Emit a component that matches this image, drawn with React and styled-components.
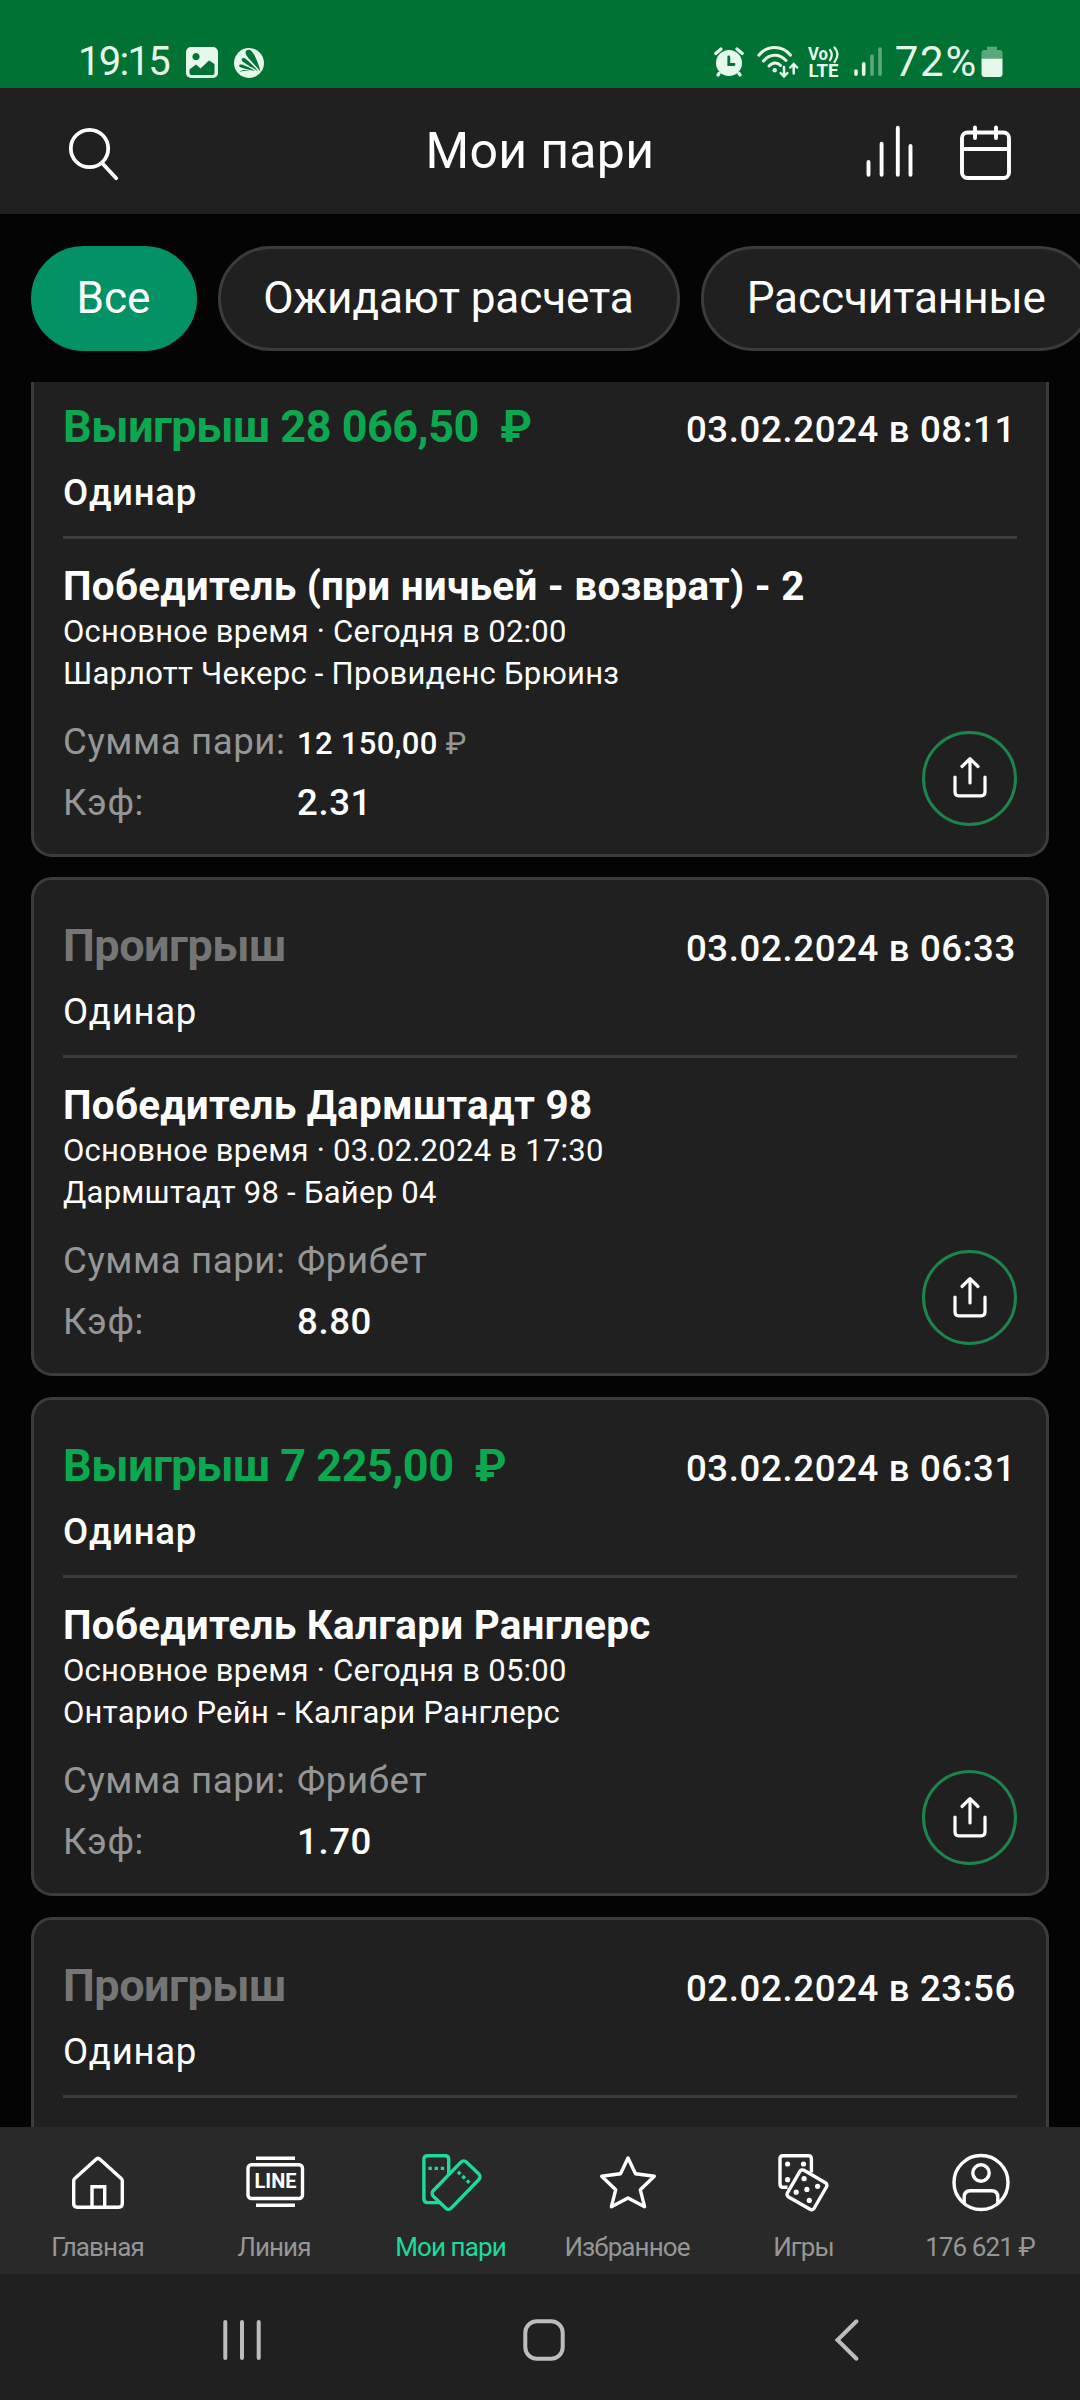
import React from "react";
import styled, { createGlobalStyle } from "styled-components";

const GlobalStyle = createGlobalStyle`
  * {
    box-sizing: border-box;
  }
  body {
    margin: 0;
    background: #040404;
    font-family: Roboto, "Liberation Sans", sans-serif;
    color: #fff;
  }
  svg {
    display: block;
    flex-shrink: 0;
  }
`;

const Screen = styled.div`
  width: 1080px;
  height: 2400px;
  display: flex;
  flex-direction: column;
  overflow: hidden;
  background: #040404;
`;

/* status bar */
const StatusBar = styled.div`
  height: 88px;
  flex-shrink: 0;
  display: flex;
  justify-content: space-between;
  padding: 42px 77px 0 78px;
  background: #007233;
  color: #e6f8ec;
`;
const StatusGroup = styled.div`
  display: flex;
  height: 40px;
  gap: ${({ $gap }) => $gap || 0};
`;
const StatusText = styled.span`
  font-size: ${({ $size }) => $size || "40px"};
  line-height: 40px;
  letter-spacing: ${({ $spacing }) => $spacing};
  white-space: nowrap;
`;

/* header */
const Header = styled.header`
  height: 126px;
  flex-shrink: 0;
  display: grid;
  grid-template-columns: 1fr auto 1fr;
  align-items: center;
  padding: 0 64px;
  background: #202020;
`;
const HeaderTitle = styled.h1`
  margin: 0;
  font-size: 50px;
  font-weight: 400;
  line-height: 60px;
  letter-spacing: 0.3px;
`;
const HeaderActions = styled.div`
  display: flex;
  justify-content: flex-end;
  gap: 47px;
`;

/* filter pills */
const Filters = styled.div`
  height: 168px;
  flex-shrink: 0;
  display: flex;
  gap: 21px;
  padding: 32px 0 0 31px;
`;
const Pill = styled.button`
  flex-shrink: 0;
  height: 105px;
  padding: 0 43.3px 0 42.6px;
  border: 3px solid ${({ $active }) => ($active ? "#039265" : "#3c3c3c")};
  border-radius: 53px;
  background: ${({ $active }) => ($active ? "#039265" : "#202020")};
  color: #fff;
  font-family: inherit;
  font-size: 44.1px;
  line-height: 53px;
  letter-spacing: -0.1px;
  white-space: nowrap;
`;

/* bets */
const BetList = styled.main`
  flex: 1;
  min-height: 0;
  overflow: hidden;
  padding: 0 31px;
`;
const BetCard = styled.article`
  height: 499px;
  margin-bottom: 20.8px;
  padding: 39px 29px 0;
  border: 3px solid #3c3c3c;
  border-radius: 21px;
  background: #202020;

  &:first-child {
    margin-top: -24.4px;
  }
`;
const CardTop = styled.div`
  display: flex;
  justify-content: space-between;
  align-items: baseline;
  height: 53px;
`;
const Result = styled.h2`
  margin: 0;
  font-size: 45px;
  font-weight: 700;
  line-height: 53px;
  letter-spacing: -0.5px;
  white-space: pre;
  color: ${({ $win }) => ($win ? "#0ba84f" : "#757575")};
`;
const BetDate = styled.span`
  font-size: 36.6px;
  font-weight: 500;
  line-height: 43px;
  letter-spacing: 0.65px;
  margin-right: 1px;
`;
const BetType = styled.div`
  margin-top: 18px;
  font-size: 36.6px;
  font-weight: ${({ $win }) => ($win ? 500 : 400)};
  line-height: 43px;
  letter-spacing: 0.7px;
`;
const Divider = styled.hr`
  height: 3px;
  margin: 22px 0 25px;
  border: 0;
  background: #3c3c3c;
`;
const Outcome = styled.h3`
  margin: 0 0 1px;
  font-size: 40.4px;
  font-weight: 700;
  line-height: 46px;
  letter-spacing: 0.26px;
`;
const EventLine = styled.div`
  font-size: 31px;
  line-height: 42px;
  letter-spacing: 0.26px;
`;
const CardBottom = styled.div`
  display: flex;
  justify-content: space-between;
  margin-top: 25px;
`;
const Facts = styled.div`
  display: grid;
  grid-template-columns: 234px auto;
  row-gap: 18px;
  align-content: start;
  line-height: 43px;
`;
const Label = styled.span`
  font-size: 36.6px;
  color: #969696;
  letter-spacing: 0.6px;
  white-space: nowrap;
`;
const Value = styled.span`
  height: 43px;
  font-size: ${({ $small }) => ($small ? "31px" : "36.6px")};
  font-weight: 500;
  letter-spacing: ${({ $small }) => ($small ? "0.3px" : "0.6px")};
  padding-top: ${({ $small }) => ($small ? "2px" : "0")};
`;
const Currency = styled.span`
  font-weight: 400;
  color: #969696;
`;
const ShareButton = styled.button`
  width: 95px;
  height: 95px;
  margin-top: 11px;
  padding: 0;
  display: flex;
  align-items: center;
  justify-content: center;
  border: 3px solid #1b864b;
  border-radius: 50%;
  background: none;
`;

/* bottom navigation */
const TabBar = styled.nav`
  height: 147px;
  flex-shrink: 0;
  display: grid;
  grid-template-columns: repeat(6, 176.5px);
  padding: 23px 11px 0 10px;
  background: #292929;
`;
const Tab = styled.a`
  display: flex;
  flex-direction: column;
  align-items: center;
  color: ${({ $active }) => ($active ? "#1cdb9d" : "#fff")};
`;
const TabLabel = styled.span`
  margin-top: 18px;
  padding-right: 1.5px;
  font-size: 26px;
  line-height: 30px;
  letter-spacing: -0.9px;
  white-space: nowrap;
  color: ${({ $active }) => ($active ? "#1cdb9d" : "#969696")};
`;

const SystemBar = styled.div`
  height: 126px;
  flex-shrink: 0;
  display: grid;
  grid-template-columns: repeat(3, 302px);
  align-items: center;
  justify-items: center;
  padding: 6px 83px 0 91px;
  background: #202020;
`;

const GalleryIcon = () => (
  <svg width="32" height="40" viewBox="0 0 32 40" fill="none">
    <path
      fillRule="evenodd"
      fill="currentColor"
      d="M5 5H27a5 5 0 0 1 5 5V31a5 5 0 0 1-5 5H5a5 5 0 0 1-5-5V10a5 5 0 0 1 5-5ZM10 11a3.6 3.6 0 1 0 .01 0ZM3.500 27.500V31a2 2 0 0 0 2 2H26.500a2 2 0 0 0 2-2V22L23 18.500 14.500 26.500 10 22.500Z"
    />
  </svg>
);

const FanIcon = () => (
  <svg width="30" height="40" viewBox="0 0 30 40">
    <circle cx="15" cy="21" r="15" fill="currentColor" />
    <g fill="#007233">
      <path d="M26.500 29.500C21 23 15 17 12.500 13.500C10.500 10.500 12 7.500 15 7.800C19.500 8.500 24 20 26.500 29.500Z" />
      <path d="M24 29C17 25 11 21.500 8.600 19.500C6.500 17.500 8.500 15 11 16.500C15 19 20 24.500 24 29Z" />
      <path d="M21 29C15 28 8.500 26 6 25C4 23.800 5.500 21.800 8 22.600C12 24 17 26.500 21 29Z" />
      <path d="M5 30C8 27.500 12 27.500 17 28.600C11 28.200 8 29.500 5 30Z" />
    </g>
  </svg>
);

const AlarmIcon = () => (
  <svg width="30" height="40" viewBox="0 0 30 40" fill="none" stroke="currentColor" strokeLinecap="round">
    <circle cx="15" cy="21" r="13" fill="currentColor" stroke="none" />
    <path d="M1.800 11.500L7 7M28.200 11.500L23 7M5 31.500L4 33M25 31.500L26 33" strokeWidth="3.200" />
    <path d="M14.800 15V22.500H20" stroke="#007233" strokeWidth="2.800" />
  </svg>
);

const WifiIcon = () => (
  <svg width="42" height="40" viewBox="0 0 42 40" fill="none" stroke="currentColor" strokeLinecap="round">
    <path d="M1.800 13.200C10.500 3 25 3 33.500 13.200" strokeWidth="3" />
    <path d="M6.500 19C13 11.500 22.500 11.500 29 18.500" strokeWidth="3" />
    <path d="M12 24C15.500 20 20.500 20 23.500 23.500" strokeWidth="3" />
    <circle cx="17.700" cy="28.300" r="2.200" fill="currentColor" stroke="none" />
    <path d="M27 25V34M23.600 31L27 34.500L30.400 31" strokeWidth="2.500" />
    <path d="M36.700 31.500V22.500M33.300 25.500L36.700 22L40.100 25.500" strokeWidth="2.500" />
  </svg>
);

const VolteIcon = () => (
  <svg width="33" height="40" viewBox="0 0 33 40" fill="currentColor">
    <text x="0" y="18" fontFamily="Roboto" fontSize="18" fontWeight="700" textLength="20" lengthAdjust="spacingAndGlyphs">
      Vo
    </text>
    <path
      d="M22 8Q25.500 12.500 22 18M26.500 5.500Q32.500 12 26.500 20"
      fill="none"
      stroke="currentColor"
      strokeWidth="2.200"
      strokeLinecap="round"
    />
    <text x="0.500" y="35" fontFamily="Roboto" fontSize="18" fontWeight="700" textLength="30" lengthAdjust="spacingAndGlyphs">
      LTE
    </text>
  </svg>
);

const SignalIcon = () => (
  <svg width="28" height="40" viewBox="0 0 28 40" stroke="currentColor" strokeWidth="3.600" strokeLinecap="round">
    <path d="M2 29V32.300M9.700 21.700V32.300" />
    <path d="M18 14V32.300M26 7V32.300" opacity="0.4" />
  </svg>
);

const BatteryIcon = () => (
  <svg width="22" height="40" viewBox="0 0 22 40" fill="currentColor">
    <path d="M6 4.700H16V8H19A2.500 2.500 0 0 1 21.500 10.500V17H0.500V10.500A2.500 2.500 0 0 1 3 8H6Z" opacity="0.4" />
    <path d="M0.500 16.700H21.500V32A3 3 0 0 1 18.500 35H3.500A3 3 0 0 1 0.500 32Z" />
  </svg>
);

const SearchIcon = () => (
  <svg width="60" height="60" viewBox="60 119 60 60" overflow="visible" fill="none" stroke="#fff" strokeWidth="3.800" strokeLinecap="round">
    <circle cx="85.500" cy="146.500" r="18.700" />
    <path d="M98.500 161.500L112.200 176.200" />
  </svg>
);

const StatsIcon = () => (
  <svg width="48" height="58" viewBox="0 0 48 58" fill="none" stroke="#fff" strokeWidth="3.900" strokeLinecap="round">
    <path d="M3.500 40V52.700M16.600 21.700V52.700M32.800 5.700V52.700M45.500 24V52.700" />
  </svg>
);

const CalendarIcon = () => (
  <svg width="56" height="58" viewBox="0 0 56 58" fill="none" stroke="#fff" strokeWidth="3.900" strokeLinecap="round">
    <rect x="2" y="10.500" width="47" height="45.500" rx="5.500" />
    <path d="M2 27H49M15 5.500V16M36 5.500V16" />
  </svg>
);

const ShareIcon = () => (
  <svg width="36" height="44" viewBox="0 0 36 44" fill="none" stroke="#fff" strokeWidth="3.200" strokeLinecap="round" strokeLinejoin="round">
    <path d="M18 27V3.500M10 10.500L18 2.700L26 10.500" />
    <path d="M3 21V36Q3 39.800 6.800 39.800H29.200Q33 39.800 33 36V21" />
  </svg>
);

const TabIcon = ({ children }) => (
  <svg width="64" height="64" viewBox="0 0 64 64" fill="none" stroke="currentColor" strokeWidth="3.400" strokeLinejoin="round">
    {children}
  </svg>
);

const HomeIcon = () => (
  <TabIcon>
    <path d="M7.700 31Q7.700 29.500 8.800 28.400L29.800 9.400Q32 7.400 34.200 9.400L55.200 28.400Q56.300 29.500 56.300 31V53.600Q56.300 57.200 52.700 57.200H11.300Q7.700 57.200 7.700 53.600Z" />
    <path d="M26 57V36.700H38.700V57" strokeLinejoin="miter" />
  </TabIcon>
);

const LineIcon = () => (
  <TabIcon>
    <path d="M13 8.300H52M13 55.200H52" />
    <rect x="5" y="14.700" width="54.500" height="33.800" rx="3.500" />
    <text
      x="11.500"
      y="38.300"
      fontFamily="Roboto"
      fontSize="20"
      fontWeight="700"
      fill="currentColor"
      stroke="none"
      textLength="42"
      lengthAdjust="spacingAndGlyphs"
    >
      LINE
    </text>
  </TabIcon>
);

const TicketsIcon = () => (
  <TabIcon>
    <path d="M22.500 52.600H8.400Q4.900 52.600 4.900 49.100V9.200Q4.900 5.700 8.400 5.700H26.200Q29.700 5.700 29.700 9.200V24" />
    <path d="M9.400 18.400H12.800M15.600 18.400H19M21.800 18.400H25.200" />
    <g transform="rotate(44 37.100 35.100)">
      <rect x="24.600" y="11.400" width="25" height="47.500" rx="3.800" />
      <path d="M29.200 24.200H32.600M35.400 24.200H38.800M41.600 24.200H45" />
    </g>
  </TabIcon>
);

const StarIcon = () => (
  <TabIcon>
    <path d="M32 8L39.500 23.700L58.300 26.200L44.300 39.800L48.600 56.700L32 48L15.400 56.700L19.700 39.800L5.700 26.200L24.500 23.700Z" />
  </TabIcon>
);

const DiceIcon = () => (
  <TabIcon>
    <path d="M15.500 37.300H11Q8 37.300 8 34.300V8.700Q8 5.700 11 5.700H36.400Q39.400 5.700 39.400 8.700V22.500" />
    <rect x="19.600" y="24.400" width="30.800" height="30.800" rx="3" transform="rotate(30 35 39.800)" />
    <g fill="currentColor" stroke="none">
      <circle cx="15.600" cy="14" r="2.600" />
      <circle cx="31.500" cy="14" r="2.600" />
      <circle cx="15.600" cy="29.700" r="2.600" />
      <circle cx="32.100" cy="28.700" r="2.600" />
      <circle cx="45.600" cy="36.300" r="2.600" />
      <circle cx="34.900" cy="39.400" r="2.600" />
      <circle cx="24.200" cy="42.200" r="2.600" />
      <circle cx="37.300" cy="50.400" r="2.600" />
    </g>
  </TabIcon>
);

const ProfileIcon = () => (
  <TabIcon>
    <circle cx="32" cy="32.500" r="27" />
    <circle cx="32" cy="23" r="8.200" />
    <path d="M15.200 53V47Q15.200 40.700 21.500 40.700H42.500Q48.800 40.700 48.800 47V53" />
  </TabIcon>
);

const filters = ["Все", "Ожидают расчета", "Рассчитанные"];

const bets = [
  {
    win: true,
    result: "Выигрыш 28 066,50  ₽",
    date: "03.02.2024 в 08:11",
    outcome: "Победитель (при ничьей - возврат) - 2",
    time: "Основное время · Сегодня в 02:00",
    teams: "Шарлотт Чекерс - Провиденс Брюинз",
    amount: "12 150,00",
    odds: "2.31",
  },
  {
    win: false,
    result: "Проигрыш",
    date: "03.02.2024 в 06:33",
    outcome: "Победитель Дармштадт 98",
    time: "Основное время · 03.02.2024 в 17:30",
    teams: "Дармштадт 98 - Байер 04",
    odds: "8.80",
  },
  {
    win: true,
    result: "Выигрыш 7 225,00  ₽",
    date: "03.02.2024 в 06:31",
    outcome: "Победитель Калгари Ранглерс",
    time: "Основное время · Сегодня в 05:00",
    teams: "Онтарио Рейн - Калгари Ранглерс",
    odds: "1.70",
  },
  {
    win: false,
    result: "Проигрыш",
    date: "02.02.2024 в 23:56",
  },
];

const tabs = [
  { label: "Главная", icon: HomeIcon },
  { label: "Линия", icon: LineIcon },
  { label: "Мои пари", icon: TicketsIcon, active: true },
  { label: "Избранное", icon: StarIcon },
  { label: "Игры", icon: DiceIcon },
  { label: "176 621 ₽", icon: ProfileIcon },
];

const Bet = ({ bet }) => (
  <BetCard>
    <CardTop>
      <Result $win={bet.win}>{bet.result}</Result>
      <BetDate>{bet.date}</BetDate>
    </CardTop>
    <BetType $win={bet.win}>Одинар</BetType>
    <Divider />
    {bet.outcome && (
      <>
        <Outcome>{bet.outcome}</Outcome>
        <EventLine>{bet.time}</EventLine>
        <EventLine>{bet.teams}</EventLine>
        <CardBottom>
          <Facts>
            <Label>Сумма пари:</Label>
            {bet.amount ? (
              <Value $small>
                {bet.amount} <Currency>₽</Currency>
              </Value>
            ) : (
              <Label>Фрибет</Label>
            )}
            <Label>Кэф:</Label>
            <Value>{bet.odds}</Value>
          </Facts>
          <ShareButton>
            <ShareIcon />
          </ShareButton>
        </CardBottom>
      </>
    )}
  </BetCard>
);

const App = () => (
  <>
    <GlobalStyle />
    <Screen>
      <StatusBar>
        <StatusGroup $gap="16.5px">
          <StatusText $spacing="-1.7px">19:15</StatusText>
          <GalleryIcon />
          <FanIcon />
        </StatusGroup>
        <StatusGroup $gap="13px">
          <AlarmIcon />
          <StatusGroup $gap="9px">
            <WifiIcon />
            <VolteIcon />
          </StatusGroup>
          <SignalIcon />
          <StatusGroup $gap="3px">
            <StatusText $size="42px" $spacing="1.8px">
              72%
            </StatusText>
            <BatteryIcon />
          </StatusGroup>
        </StatusGroup>
      </StatusBar>

      <Header>
        <SearchIcon />
        <HeaderTitle>Мои пари</HeaderTitle>
        <HeaderActions>
          <StatsIcon />
          <CalendarIcon />
        </HeaderActions>
      </Header>

      <Filters>
        {filters.map((name, i) => (
          <Pill key={name} $active={i === 0}>
            {name}
          </Pill>
        ))}
      </Filters>

      <BetList>
        {bets.map((bet) => (
          <Bet key={bet.date} bet={bet} />
        ))}
      </BetList>

      <TabBar>
        {tabs.map(({ label, icon: Icon, active }) => (
          <Tab key={label} $active={active}>
            <Icon />
            <TabLabel $active={active}>{label}</TabLabel>
          </Tab>
        ))}
      </TabBar>

      <SystemBar>
        <svg width="44" height="44" viewBox="0 0 44 44" stroke="#bdbdbd" strokeWidth="4" strokeLinecap="round">
          <path d="M5.300 4V40M22 4V40M38.700 4V40" />
        </svg>
        <svg width="44" height="44" viewBox="0 0 44 44" fill="none" stroke="#bdbdbd" strokeWidth="4">
          <rect x="3.300" y="3.300" width="37.400" height="37.400" rx="11.500" />
        </svg>
        <svg width="44" height="44" viewBox="0 0 44 44" fill="none" stroke="#bdbdbd" strokeWidth="4" strokeLinecap="round">
          <path d="M32.500 3.300L13.500 22L32.500 40.700" />
        </svg>
      </SystemBar>
    </Screen>
  </>
);

export default App;
